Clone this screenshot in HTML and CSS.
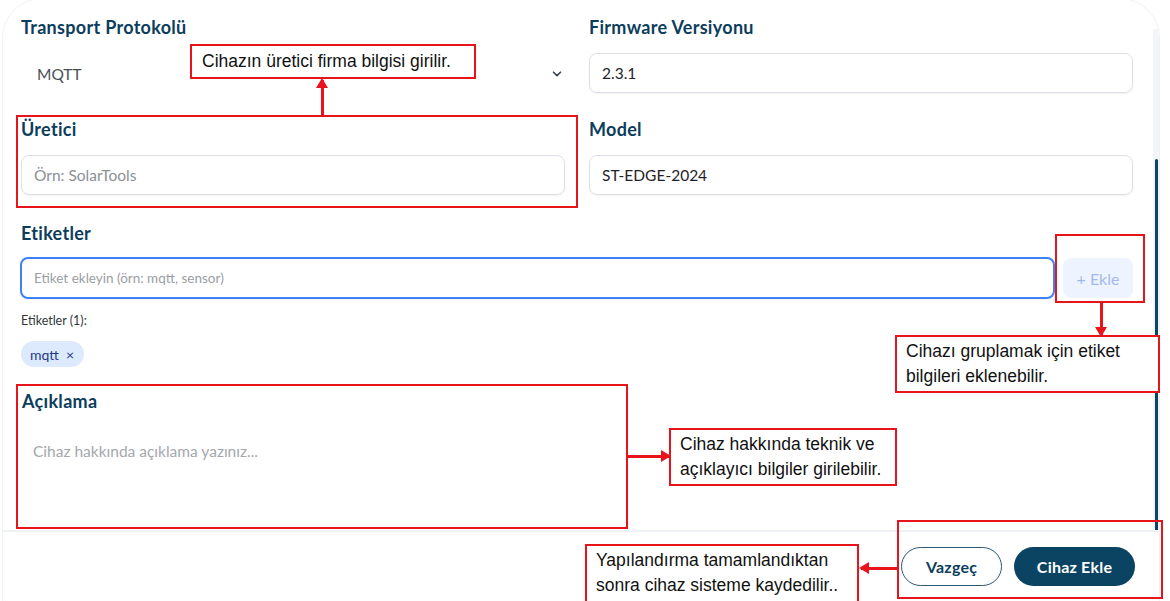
FILE: index.html
```html
<!DOCTYPE html>
<html lang="tr">
<head>
    <meta charset="UTF-8">
    <meta name="viewport" content="width=device-width, initial-scale=1.0">
    <title>Cihaz Ekle</title>
    <link rel="stylesheet" href="styles.css">
</head>
<body>
<div class="modal">
    <div class="modal-body">
        <div class="form">
            <div class="row">
                <div class="field">
                    <label class="label">Transport Protokolü</label>
                    <div class="select">
                        <span>MQTT</span>
                        <svg width="10" height="6" viewBox="0 0 10 6"><path d="M1.5 1.2 5 4.6 8.5 1.2" fill="none" stroke="#3b4350" stroke-width="1.6" stroke-linecap="round" stroke-linejoin="round"/></svg>
                    </div>
                </div>
                <div class="field">
                    <label class="label">Firmware Versiyonu</label>
                    <div class="input">2.3.1</div>
                </div>
            </div>
            <div class="row">
                <div class="field">
                    <label class="label">Üretici</label>
                    <div class="input placeholder">Örn: SolarTools</div>
                </div>
                <div class="field">
                    <label class="label">Model</label>
                    <div class="input">ST-EDGE-2024</div>
                </div>
            </div>

            <div class="tags">
                <label class="label">Etiketler</label>
                <div class="tag-row">
                    <div class="input tag-input placeholder">Etiket ekleyin (örn: mqtt, sensor)</div>
                    <button class="add-btn">+ Ekle</button>
                </div>
                <div class="tag-count">Etiketler (1):</div>
                <div class="chips">
                    <span class="chip">mqtt <span class="chip-x">×</span></span>
                </div>
            </div>

            <div class="desc">
                <label class="label">Açıklama</label>
                <div class="textarea">Cihaz hakkında açıklama yazınız...</div>
            </div>
        </div>
        <div class="scrollbar"><div class="thumb"></div></div>
    </div>
    <div class="modal-footer">
        <button class="btn btn-outline">Vazgeç</button>
        <button class="btn btn-primary">Cihaz Ekle</button>
    </div>
</div>

<!-- açıklama notları -->
<div class="note note-maker">Cihazın üretici firma bilgisi girilir.</div>
<div class="frame frame-maker"></div>
<div class="arrow arrow-up" style="left:321px; top:80px; height:36px;"></div>

<div class="frame frame-add"></div>
<div class="arrow arrow-down" style="left:1100px; top:302px; height:33px;"></div>
<div class="note note-tags">Cihazı gruplamak için etiket<br>bilgileri eklenebilir.</div>

<div class="frame frame-desc"></div>
<div class="arrow arrow-right" style="left:627px; top:455px; width:42px;"></div>
<div class="note note-desc">Cihaz hakkında teknik ve<br>açıklayıcı bilgiler girilebilir.</div>

<div class="frame frame-footer"></div>
<div class="arrow arrow-left" style="left:861px; top:567px; width:36px;"></div>
<div class="note note-save">Yapılandırma tamamlandıktan<br>sonra cihaz sisteme kaydedilir..</div>
</body>
</html>
```

FILE: styles.css
```css
body {
    margin: 0;
    background: #fff;
    font-family: Lato, "Open Sans", sans-serif;
    overflow: hidden;
    height: 601px;
}

.modal {
    width: 1158px;
    height: 640px;
    margin: -2px 0 0 2px;
    border: 1px solid #f1f2f4;
    border-radius: 40px;
    display: flex;
    flex-direction: column;
    overflow: hidden;
    box-sizing: border-box;
}

.modal-body {
    display: flex;
    height: 533px;
    border-bottom: 2px solid #eef1f5;
    box-sizing: border-box;
}

.form {
    flex: 1;
    padding: 17px 20px 0 18px;
}

.row {
    display: grid;
    grid-template-columns: 1fr 1fr;
    gap: 24px;
    margin-bottom: 25px;
}

.label {
    display: block;
    font-size: 18px;
    font-weight: 700;
    letter-spacing: 0.3px;
    color: #0d3d5c;
    line-height: 22px;
    margin-bottom: 15px;
}

.input {
    height: 40px;
    box-sizing: border-box;
    border: 1px solid #dcdfe5;
    border-radius: 8px;
    box-shadow: 0 1px 2px rgba(0, 0, 0, 0.06);
    padding: 0 12px;
    display: flex;
    align-items: center;
    font-size: 15.5px;
    color: #1f2328;
}

.placeholder {
    color: #8c9096;
}

.select {
    height: 40px;
    display: flex;
    align-items: center;
    justify-content: space-between;
    padding: 2px 3px 0 16px;
    box-sizing: border-box;
    font-size: 15.5px;
    color: #4a4f57;
}

.tags {
    padding-top: 2px;
}

.tags .label {
    margin-bottom: 13px;
}

.tag-row {
    display: flex;
    gap: 8px;
}

.tag-input {
    flex: 1;
    height: 42px;
    border: 2px solid #3b82f6;
    font-size: 13.5px;
    color: #9a9ea4;
    margin-left: -1px;
}

.add-btn {
    width: 70px;
    height: 40px;
    border: none;
    border-radius: 8px;
    background: #eef4ff;
    color: #a3b9ee;
    font-family: inherit;
    font-size: 16px;
    margin-top: 1px;
}

.tag-count {
    font-size: 12.5px;
    color: #33373d;
    margin-top: 14px;
    line-height: 16px;
}

.chips {
    margin-top: 12px;
    display: flex;
}

.chip {
    background: #dde9fd;
    color: #1e3a8a;
    font-size: 14px;
    border-radius: 13px;
    height: 26px;
    padding: 0 10px 0 9px;
    display: flex;
    align-items: center;
    gap: 7px;
}

.chip-x {
    font-size: 14px;
}

.desc {
    margin-top: 23px;
}

.desc .label {
    margin: 0 0 0 1px;
}

.textarea {
    padding: 30px 12px 0;
    font-size: 15.5px;
    color: #a4a8ae;
}

.scrollbar {
    width: 6px;
    background: #f3f5f8;
    margin-top: 30px;
    display: flex;
    flex-direction: column;
    justify-content: flex-end;
}

.thumb {
    height: 371px;
    background: #0d4466;
    border-radius: 2px 2px 0 0;
    margin: 0 1px 0 2px;
}

.modal-footer {
    display: flex;
    justify-content: flex-end;
    gap: 12px;
    padding: 15px 24px 0 0;
}

.btn {
    height: 39px;
    border-radius: 20px;
    font-family: inherit;
    font-size: 16px;
    font-weight: 700;
    letter-spacing: 0.2px;
}

.btn-outline {
    width: 101px;
    background: #fff;
    border: 1px solid #2b5878;
    color: #0d3d5c;
}

.btn-primary {
    width: 121px;
    background: #0b4463;
    border: none;
    color: #fff;
}

/* notlar */
.note {
    position: absolute;
    background: #fff;
    border: 2px solid #e8141c;
    box-sizing: border-box;
    font-family: "Liberation Sans", Arial, sans-serif;
    font-size: 17.5px;
    color: #111;
    line-height: 25px;
    padding: 2px 9px;
    white-space: nowrap;
}

.frame {
    position: absolute;
    border: 2px solid #e8141c;
    box-sizing: border-box;
}

.note-maker { left: 190px; top: 44px; width: 286px; height: 35px; padding: 3px 10px; }
.note-tags { left: 895px; top: 335px; width: 265px; height: 58px; }
.note-desc { left: 669px; top: 428px; width: 228px; height: 58px; }
.note-save { left: 585px; top: 544px; width: 274px; height: 60px; }

.frame-maker { left: 16px; top: 115px; width: 562px; height: 93px; }
.frame-add { left: 1055px; top: 234px; width: 90px; height: 69px; }
.frame-desc { left: 16px; top: 384px; width: 612px; height: 145px; }
.frame-footer { left: 897px; top: 520px; width: 266px; height: 79px; }

.arrow {
    position: absolute;
    background: #e8141c;
}

.arrow-up, .arrow-down { width: 3px; }
.arrow-left, .arrow-right { height: 3px; }

.arrow::after {
    content: "";
    position: absolute;
    border: 6px solid transparent;
}

.arrow-up::after {
    top: -2px;
    left: -5px;
    border-bottom: 10px solid #e8141c;
    border-top: 0;
}

.arrow-down::after {
    bottom: -2px;
    left: -5px;
    border-top: 10px solid #e8141c;
    border-bottom: 0;
}

.arrow-right::after {
    right: -2px;
    top: -5px;
    border-left: 10px solid #e8141c;
    border-right: 0;
}

.arrow-left::after {
    left: -2px;
    top: -5px;
    border-right: 10px solid #e8141c;
    border-left: 0;
}
```
